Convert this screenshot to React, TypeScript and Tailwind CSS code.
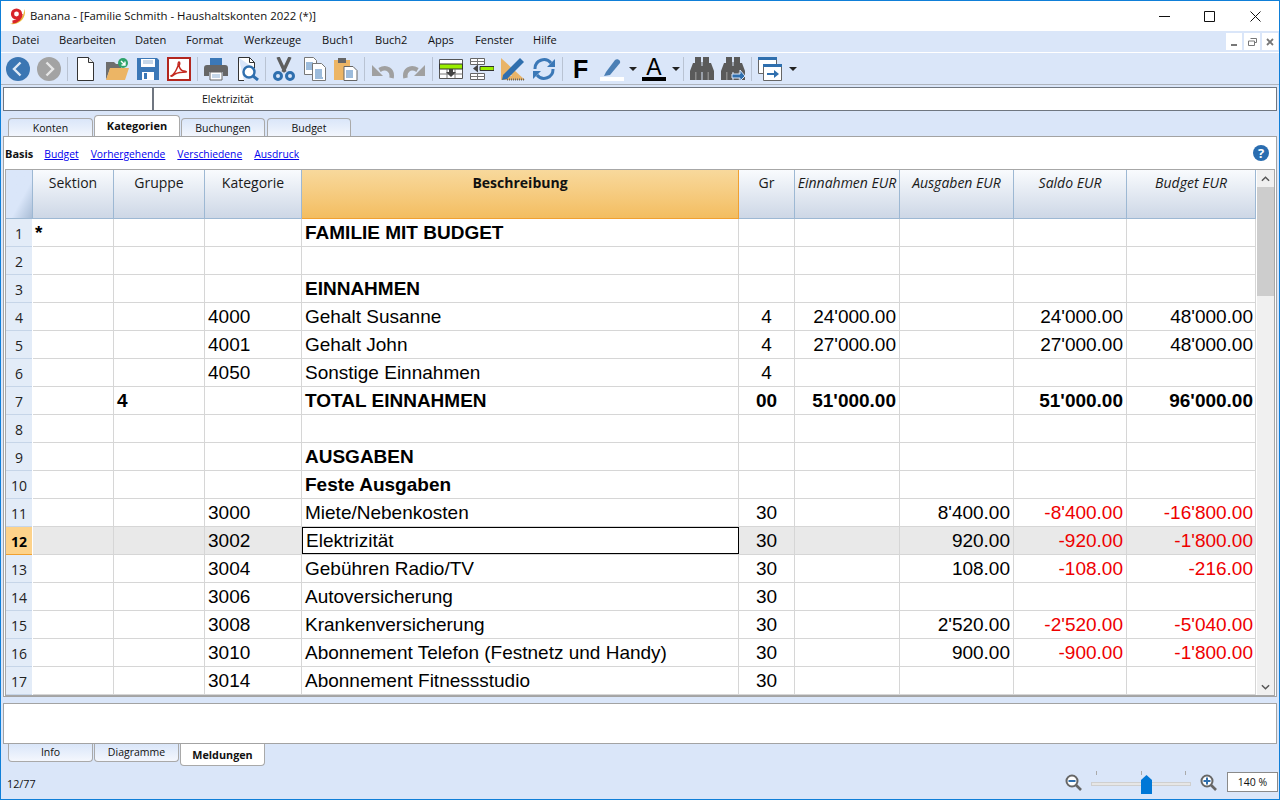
import type { ReactNode } from "react";

const ui = "font-['Open_Sans',sans-serif]";
const cell = "font-['Liberation_Sans',sans-serif]";
const gridCols = "grid grid-cols-[27px_81px_91px_97px_437px_56px_105px_114px_113px_129px]";

const menus = [
  ["Datei", "w-[47px]"],
  ["Bearbeiten", "w-[76px]"],
  ["Daten", "w-[51px]"],
  ["Format", "w-[58px]"],
  ["Werkzeuge", "w-[78px]"],
  ["Buch1", "w-[53px]"],
  ["Buch2", "w-[53px]"],
  ["Apps", "w-[47px]"],
  ["Fenster", "w-[58px]"],
  ["Hilfe", "w-[40px]"],
];

type Row = {
  sek?: string;
  grp?: string;
  kat?: string;
  desc?: string;
  gr?: string;
  ein?: string;
  aus?: string;
  sal?: string;
  bud?: string;
  bold?: boolean;
};

const rows: Row[] = [
  { sek: "*", desc: "FAMILIE MIT BUDGET", bold: true },
  {},
  { desc: "EINNAHMEN", bold: true },
  { kat: "4000", desc: "Gehalt Susanne", gr: "4", ein: "24'000.00", sal: "24'000.00", bud: "48'000.00" },
  { kat: "4001", desc: "Gehalt John", gr: "4", ein: "27'000.00", sal: "27'000.00", bud: "48'000.00" },
  { kat: "4050", desc: "Sonstige Einnahmen", gr: "4" },
  { grp: "4", desc: "TOTAL EINNAHMEN", gr: "00", ein: "51'000.00", sal: "51'000.00", bud: "96'000.00", bold: true },
  {},
  { desc: "AUSGABEN", bold: true },
  { desc: "Feste Ausgaben", bold: true },
  { kat: "3000", desc: "Miete/Nebenkosten", gr: "30", aus: "8'400.00", sal: "-8'400.00", bud: "-16'800.00" },
  { kat: "3002", desc: "Elektrizität", gr: "30", aus: "920.00", sal: "-920.00", bud: "-1'800.00" },
  { kat: "3004", desc: "Gebühren Radio/TV", gr: "30", aus: "108.00", sal: "-108.00", bud: "-216.00" },
  { kat: "3006", desc: "Autoversicherung", gr: "30" },
  { kat: "3008", desc: "Krankenversicherung", gr: "30", aus: "2'520.00", sal: "-2'520.00", bud: "-5'040.00" },
  { kat: "3010", desc: "Abonnement Telefon (Festnetz und Handy)", gr: "30", aus: "900.00", sal: "-900.00", bud: "-1'800.00" },
  { kat: "3014", desc: "Abonnement Fitnessstudio", gr: "30" },
];

const Ico = ({ children }: { children: ReactNode }) => (
  <svg viewBox="0 0 24 24" className="w-6 h-6 block">
    {children}
  </svg>
);

const Btn = ({ children }: { children: ReactNode }) => <div className="w-[31px] shrink-0">{children}</div>;

const Sep = () => (
  <div className="w-[6px] shrink-0 flex">
    <div className="w-px h-6 bg-[#b9c3d3] -ml-px" />
  </div>
);

const Caret = ({ className }: { className: string }) => (
  <svg viewBox="0 0 8 4" className={`w-2 h-1 ${className}`}>
    <path d="M0 0h8L4 4z" fill="#222" />
  </svg>
);

const Lines = ({ x, y }: { x: number; y: number }) => (
  <path
    d={`M${x} ${y}h7M${x} ${y + 2}h7M${x} ${y + 4}h7M${x} ${y + 6}h7`}
    stroke="#3a78b8"
    strokeWidth="1"
  />
);

const Binoculars = () => (
  <>
    <path d="M5 0h6v5h.5v18H0v-9l3-8h2zM13 0h6v6h2l3 8v9H12.500V5h.5z" fill="#5a5a5a" />
    <path d="M11 9h2v6h-2z" fill="#5a5a5a" />
    <path d="M5 15h1.500v8H5zM17.500 15H19v8h-1.500z" fill="#8a8a8a" />
  </>
);

const Toolbar = () => (
  <div className="h-[31px] flex items-center pl-[5px] bg-[#dae6f9] border-b border-[#aeb4bd] box-content">
    <Btn>
      <Ico>
        <circle cx="12" cy="12" r="12" fill="#3b76b3" />
        <path d="M14.5 5.5 8 12l6.5 6.5" fill="none" stroke="#dfe9f5" strokeWidth="2.4" />
      </Ico>
    </Btn>
    <Btn>
      <Ico>
        <circle cx="12" cy="12" r="12" fill="#a3a3a3" />
        <path d="M9.5 5.5 16 12l-6.5 6.5" fill="none" stroke="#e6e6e6" strokeWidth="2.4" />
      </Ico>
    </Btn>
    <Sep />
    <Btn>
      <Ico>
        <path d="M3.5.5h11l5 5v18h-16z" fill="#fff" stroke="#333" />
        <path d="M14.5.5v5h5" fill="#eee" stroke="#333" />
      </Ico>
    </Btn>
    <Btn>
      <Ico>
        <path d="M1 5h8l2 2h5v5H5l-4 11z" fill="#6e6e6e" />
        <path d="M5 11h19l-4 12H1z" fill="#ecb565" />
        <circle cx="18" cy="6" r="5" fill="#2fa36b" />
        <path d="M16 4l4 4m0-3.5V8h-3.5" fill="none" stroke="#fff" strokeWidth="1.4" />
      </Ico>
    </Btn>
    <Btn>
      <Ico>
        <path d="M1 1h20l2 2v20H1z" fill="#3b78b7" />
        <path d="M5 2h14v8H5z" fill="#fff" />
        <path d="M7 4h10M7 6h10" stroke="#8db0d3" />
        <path d="M6 15h12v8H6z" fill="#fff" />
        <path d="M8 16h3v6H8z" fill="#3b78b7" />
      </Ico>
    </Btn>
    <Btn>
      <Ico>
        <path d="M1 1h22v22H1z" fill="#fff" stroke="#b3261e" strokeWidth="2" />
        <path
          d="M4 19c3-1 5-5 7-10 0-2 0-4 1-4s1 2 0 4c1 3 3 5 5 5 2 0 3 1 2 1-3 0-7 0-11 2-2 1-3 3-4 2z"
          fill="none"
          stroke="#c4281f"
          strokeWidth="1.5"
        />
      </Ico>
    </Btn>
    <Sep />
    <Btn>
      <Ico>
        <path d="M6 1h12v7H6z" fill="#3b78b7" />
        <path d="M3 8h18a3 3 0 0 1 3 3v8h-5v-4H5v4H0v-8a3 3 0 0 1 3-3z" fill="#666" />
        <path d="M6 15h12v8H6z" fill="#fff" stroke="#666" />
        <path d="M8 18h8M8 20h8" stroke="#8db0d3" />
      </Ico>
    </Btn>
    <Btn>
      <Ico>
        <path d="M3.5.5h11l5 5v6M9 23.5H3.5V.5" fill="#fff" stroke="#333" />
        <path d="M14.5.5v5h5" fill="none" stroke="#333" />
        <circle cx="14" cy="15" r="5.5" fill="#fff" stroke="#2f6fae" strokeWidth="2.4" />
        <path d="M18 19l5 4" stroke="#2f6fae" strokeWidth="3" />
      </Ico>
    </Btn>
    <Sep />
    <Btn>
      <Ico>
        <path d="M6 0l7 15M18 0l-7 15" stroke="#5f5f5f" strokeWidth="3.4" />
        <circle cx="6" cy="19" r="3.500" fill="none" stroke="#2f6fae" strokeWidth="3" />
        <circle cx="18" cy="19" r="3.500" fill="none" stroke="#2f6fae" strokeWidth="3" />
      </Ico>
    </Btn>
    <Btn>
      <Ico>
        <path d="M1.5.5h9l3 3v14h-12z" fill="#fff" stroke="#777" />
        <Lines x={3} y={6} />
        <path d="M9.5 6.5h9l4 4v13h-13z" fill="#fff" stroke="#777" />
        <Lines x={12} y={13} />
        <path d="M12 21h8" stroke="#3a78b8" />
      </Ico>
    </Btn>
    <Btn>
      <Ico>
        <path d="M0 3h16v20H0z" fill="#ecb565" />
        <path d="M4 1h8v5H4z" fill="#666" />
        <path d="M10 9.5h9l4 4v10H10z" fill="#fff" stroke="#666" />
        <Lines x={12} y={14} />
      </Ico>
    </Btn>
    <Sep />
    <Btn>
      <Ico>
        <path d="M20.500 21c1.500-8-5-12-12-8" fill="none" stroke="#a0a0a0" strokeWidth="4.500" />
        <path d="M1 19V8l11 11z" fill="#a0a0a0" />
      </Ico>
    </Btn>
    <Btn>
      <Ico>
        <path d="M3.500 21c-1.500-8 5-12 12-8" fill="none" stroke="#a0a0a0" strokeWidth="4.500" />
        <path d="M23 19V8L12 19z" fill="#a0a0a0" />
      </Ico>
    </Btn>
    <Sep />
    <Btn>
      <Ico>
        <path d="M.5 2.500h23v19H.5z" fill="#fff" stroke="#555" />
        <path d="M.5 7h23v5H.5z" fill="#99ee00" stroke="#333" />
        <path d="M.5 17h23M8 12v9M16 12v9" stroke="#777" />
        <path d="M10 12h4v3h3l-5 5-5-5h3z" fill="#444" />
      </Ico>
    </Btn>
    <Btn>
      <Ico>
        <path d="M.5 1.500h14v6H.5zM.5 16.500h14v6H.5z" fill="#fff" stroke="#666" />
        <path d="M.5 4.500h14M7.500 1.500v6M.5 19.500h14M7.500 16.500v6" stroke="#777" />
        <path d="M10 9.500h14v4H10z" fill="#99ee00" stroke="#333" />
        <path d="M3 11.500l5-4v8z" fill="#444" />
      </Ico>
    </Btn>
    <Btn>
      <Ico>
        <path d="M0 1l24 22H0z" fill="#e9b468" />
        <path d="M6 14l5 5H6z" fill="#dae6f9" />
        <path d="M2 18L17 3l2-2 4 4-2 2L6 22l-5 1z" fill="#2f6fae" />
        <path d="M6 22.500h18" stroke="#666" strokeDasharray="1 1" strokeWidth="2" />
      </Ico>
    </Btn>
    <Btn>
      <Ico>
        <path d="M3 12a9 9 0 0 1 16-6" fill="none" stroke="#3b78b7" strokeWidth="3" />
        <path d="M21 12a9 9 0 0 1-16 6" fill="none" stroke="#3b78b7" strokeWidth="3" />
        <path d="M23 2v8h-8zM1 22v-8h8z" fill="#3b78b7" />
      </Ico>
    </Btn>
    <Sep />
    <div className={`w-[31px] shrink-0 pl-[4px] text-[25px] leading-6 font-bold text-black ${cell}`}>F</div>
    <div className="w-[42px] shrink-0 relative h-6">
      <svg viewBox="0 0 24 24" className="w-6 h-6 block">
        <path d="M6 15l9-12c2-2 6 0 5 3L10 18l-6 1z" fill="#4b7fb5" />
        <path d="M0 20h24v4H0z" fill="#fff" />
      </svg>
      <Caret className="absolute left-[29px] top-[10px]" />
    </div>
    <div className={`w-[42px] shrink-0 relative h-6 ${cell}`}>
      <div className="w-6 text-center text-[23px] leading-[20px] text-black">A</div>
      <div className="w-6 h-1 bg-black absolute left-0 top-5" />
      <Caret className="absolute left-[30px] top-[10px]" />
    </div>
    <Sep />
    <Btn>
      <Ico>
        <Binoculars />
      </Ico>
    </Btn>
    <Btn>
      <Ico>
        <Binoculars />
        <path d="M11 17h8v-4l5 6-5 5v-3h-8z" fill="#2f6fae" stroke="#dae6f9" />
      </Ico>
    </Btn>
    <Sep />
    <Btn>
      <Ico>
        <path d="M.5.500h18v16H.5z" fill="#fff" stroke="#666" />
        <path d="M0 0h19v3H0z" fill="#2f6fae" />
        <path d="M5.500 7.500h18v16h-18z" fill="#fff" stroke="#666" />
        <path d="M5 7h19v3H5z" fill="#2f6fae" />
        <path d="M9 16h7v-3l5 4-5 4v-3H9z" fill="#2f6fae" />
      </Ico>
    </Btn>
    <Caret className="" />
  </div>
);

const TopTab = ({ label, active, className }: { label: string; active?: boolean; className: string }) => (
  <div
    className={`${className} flex items-center justify-center border border-b-0 border-[#a9a9a9] rounded-t-[4px] text-[#111] ${
      active
        ? "h-[22px] bg-white font-bold text-[11px]"
        : "h-[19px] pt-[2px] text-[10.5px] bg-gradient-to-b from-[#dae6f9] to-[#f4f7fd]"
    }`}
  >
    {label}
  </div>
);

const BottomTab = ({ label, active, className }: { label: string; active?: boolean; className: string }) => (
  <div
    className={`${className} flex items-center justify-center border border-t-0 border-[#a9a9a9] rounded-b-[4px] text-[#111] ${
      active
        ? "h-[22px] bg-white font-bold text-[10.8px] pt-[1px]"
        : "h-[18px] text-[10.5px] bg-gradient-to-b from-[#dae6f9] to-[#f4f7fd]"
    }`}
  >
    {label}
  </div>
);

const heads = [
  { t: "Sektion", c: "w-[81px]" },
  { t: "Gruppe", c: "w-[91px]" },
  { t: "Kategorie", c: "w-[97px]" },
];
const headsRight = [
  { t: "Gr", c: "w-[56px]" },
  { t: "Einnahmen EUR", c: "w-[105px] italic" },
  { t: "Ausgaben EUR", c: "w-[114px] italic" },
  { t: "Saldo EUR", c: "w-[113px] italic" },
  { t: "Budget EUR", c: "w-[129px] italic" },
];

const headCell =
  "h-[49px] pt-[4px] text-center text-[14px] leading-[18px] text-[#1a1a1a] border-r border-b border-[#9db8d3] bg-gradient-to-b from-[#f9fbfe] to-[#cdd7e6]";

const Amount = ({ v, red, bold, className }: { v?: string; red?: boolean; bold?: boolean; className: string }) => (
  <div
    className={`border-r border-[#d6d6d6] text-right ${className} ${red ? "text-[#ee0000]" : "text-black"} ${
      bold ? "font-bold" : ""
    }`}
  >
    {v}
  </div>
);

const Table = () => (
  <div className="flex mx-[1px] border border-[#a7a7a7] h-[527px] overflow-hidden bg-white">
    <div className="w-[1250px] shrink-0">
      <div className={`flex ${ui}`}>
        <div className="w-[27px] h-[49px] bg-gradient-to-br from-[#dae6f9] from-60% to-[#a9bdd6] border-r border-b border-[#9db8d3]" />
        {heads.map((h) => (
          <div key={h.t} className={`${h.c} ${headCell}`}>
            {h.t}
          </div>
        ))}
        <div className="w-[437px] h-[49px] pt-[4px] text-center text-[14px] leading-[18px] font-bold text-[#111] border-r border-b border-[#f0a030] bg-gradient-to-b from-[#f8d99c] to-[#f3bd5f]">
          Beschreibung
        </div>
        {headsRight.map((h) => (
          <div key={h.t} className={`${h.c} ${headCell}`}>
            {h.t}
          </div>
        ))}
      </div>
      {rows.map((r, i) => {
        const sel = i === 11;
        const red = !!r.sal && r.sal.startsWith("-");
        return (
          <div
            key={i}
            className={`${gridCols} h-[28px] border-b border-[#d6d6d6] text-[19px] leading-[27px] ${cell} ${
              sel ? "bg-[#e9e9e9]" : ""
            }`}
          >
            <div className="bg-white h-[28px]">
              <div
                className={`${ui} w-[26px] text-center text-[14px] leading-[30px] text-[#222] border-b ${
                  sel
                    ? "bg-[#fdd28a] font-bold text-black border-[#f0a030]"
                    : "bg-[#e3ecf8] border-[#c6d5e8]"
                } h-[28px]`}
              >
                {i + 1}
              </div>
            </div>
            <div className="border-r border-[#d6d6d6] pl-[2px] font-bold text-black">{r.sek}</div>
            <div className="border-r border-[#d6d6d6] pl-[3px] font-bold text-black">{r.grp}</div>
            <div className="border-r border-[#d6d6d6] pl-[3px] text-black">{r.kat}</div>
            {sel ? (
              <div className="h-[27px] bg-white border border-black pl-[3px] leading-[25px] text-black">{r.desc}</div>
            ) : (
              <div className={`border-r border-[#d6d6d6] pl-[3px] text-black ${r.bold ? "font-bold" : ""}`}>{r.desc}</div>
            )}
            <div className={`border-r border-[#d6d6d6] text-center text-black ${r.bold ? "font-bold" : ""}`}>{r.gr}</div>
            <Amount v={r.ein} bold={r.bold} className="pr-[3px]" />
            <Amount v={r.aus} bold={r.bold} className="pr-[3px]" />
            <Amount v={r.sal} red={red} bold={r.bold} className="pr-[3px]" />
            <Amount v={r.bud} red={red} bold={r.bold} className="pr-[2px]" />
          </div>
        );
      })}
    </div>
    <div className="w-[17px] ml-px bg-[#f0f0f0] flex flex-col h-[525px]">
      <div className="h-[17px] flex items-center justify-center">
        <svg viewBox="0 0 10 6" className="w-[9px] h-[6px]">
          <path d="M1 5l4-4 4 4" fill="none" stroke="#555" strokeWidth="1.6" />
        </svg>
      </div>
      <div className="h-[109px] bg-[#cdcdcd]" />
      <div className="flex-1" />
      <div className="h-[17px] flex items-center justify-center">
        <svg viewBox="0 0 10 6" className="w-[9px] h-[6px]">
          <path d="M1 1l4 4 4-4" fill="none" stroke="#555" strokeWidth="1.6" />
        </svg>
      </div>
    </div>
  </div>
);

const Magnifier = ({ plus }: { plus?: boolean }) => (
  <svg viewBox="0 0 17 17" className="w-[17px] h-[17px] block">
    <circle cx="7" cy="7" r="5.5" fill="#fff" stroke="#666" strokeWidth="2" />
    <path d="M11 11l5 5" stroke="#666" strokeWidth="2.6" />
    <path d={plus ? "M3.500 7h7M7 3.500v7" : "M3.500 7h7"} stroke="#2f6fae" strokeWidth="2" />
  </svg>
);

export default function App() {
  return (
    <div className={`w-[1280px] h-[800px] border border-[#0f7fd8] bg-[#dae6f9] flex flex-col overflow-hidden ${ui}`}>
      {/* title bar */}
      <div className="h-[30px] bg-white flex items-center shrink-0">
        <svg viewBox="0 0 16 17" className="w-4 h-[17px] ml-[8px] mt-[1px]">
          <path d="M1 16c7 1 14-3 15-11 0-2-.5-3-1-4 1 7-5 13-14 15z" fill="#eab93a" />
          <circle cx="7.500" cy="6" r="4" fill="none" stroke="#d8242a" strokeWidth="3.200" />
          <path d="M12.300 6c0 4-3.500 7.500-8.800 8" fill="none" stroke="#d8242a" strokeWidth="3" />
        </svg>
        <div className="ml-[5px] text-[11.4px] text-[#111] whitespace-nowrap">Banana - [Familie Schmith - Haushaltskonten 2022 (*)]</div>
        <div className="ml-auto flex items-center">
          <svg viewBox="0 0 11 11" className="w-[11px] h-[11px] mr-[34px]">
            <path d="M0 5.500h11" stroke="#111" />
          </svg>
          <svg viewBox="0 0 11 11" className="w-[11px] h-[11px] mr-[35px]">
            <path d="M.5.500h10v10H.5z" fill="none" stroke="#111" />
          </svg>
          <svg viewBox="0 0 11 11" className="w-[11px] h-[11px] mr-[18px]">
            <path d="M.5.500l10 10M10.500.500l-10 10" stroke="#111" />
          </svg>
        </div>
      </div>

      {/* menu bar */}
      <div className="h-[21px] flex items-center pl-[5px] shrink-0 text-[11.1px] text-[#111]">
        {menus.map(([m, w]) => (
          <div key={m} className={`${w} px-[6px] pb-[3px] whitespace-nowrap`}>
            {m}
          </div>
        ))}
        <div className="ml-auto flex gap-[2px] mr-[1px]">
          <div className="w-[16px] h-[17px] bg-white flex items-end justify-center pb-[4px]">
            <div className="w-[6px] h-[2px] bg-[#777]" />
          </div>
          <div className="w-[16px] h-[17px] bg-white flex items-center justify-center">
            <svg viewBox="0 0 9 8" className="w-[9px] h-2">
              <path d="M2.500.500h6v4h-2M.5 3h6v4.500h-6z" fill="none" stroke="#777" />
            </svg>
          </div>
          <div className="w-[16px] h-[17px] bg-white flex items-center justify-center">
            <svg viewBox="0 0 8 8" className="w-2 h-2">
              <path d="M1 1l6 6M7 1l-6 6" stroke="#777" strokeWidth="1.8" />
            </svg>
          </div>
        </div>
      </div>
      <div className="h-px bg-white shrink-0" />

      <Toolbar />

      {/* formula bar */}
      <div className="mt-[2px] mx-[2px] h-[24px] flex bg-white border border-[#6f7680] shrink-0">
        <div className="w-[150px] border-r-2 border-[#6f7680]" />
        <div className="ml-[48px] text-[10.5px] leading-[22px] text-[#111]">Elektrizität</div>
      </div>

      {/* tabs */}
      <div className="h-[26px] pl-[7px] flex items-end gap-px shrink-0">
        <TopTab label="Konten" className="w-[85px]" />
        <TopTab label="Kategorien" active className="w-[86px]" />
        <TopTab label="Buchungen" className="w-[84px] mr-px" />
        <TopTab label="Budget" className="w-[84px]" />
      </div>

      {/* main panel */}
      <div className="mx-[2px] h-[561px] -mt-px bg-white border border-[#a3a3a3] shrink-0">
        <div className="h-[32px] flex items-center relative text-[10.3px] pl-[1px] pt-[3px]">
          <span className="font-bold text-[11px] text-[#111] mr-[11px]">Basis</span>
          <span className="text-[#0000ee] underline mr-[12px]">Budget</span>
          <span className="text-[#0000ee] underline mr-[12px]">Vorhergehende</span>
          <span className="text-[#0000ee] underline mr-[12px]">Verschiedene</span>
          <span className="text-[#0000ee] underline">Ausdruck</span>
          <div className="absolute right-[7px] top-[8px] w-4 h-4 rounded-full bg-[#2a6db0] text-white text-[13px] leading-4 font-bold text-center">
            ?
          </div>
        </div>
        <Table />
      </div>

      {/* message box */}
      <div className="mt-[6px] mx-[2px] h-[41px] bg-white border border-[#a3a3a3] shrink-0" />
      <div className="pl-[7px] flex items-start gap-px shrink-0 h-[22px]">
        <BottomTab label="Info" className="w-[85px]" />
        <BottomTab label="Diagramme" className="w-[85px]" />
        <BottomTab label="Meldungen" active className="w-[85px]" />
      </div>

      {/* status bar */}
      <div className="flex-1 flex items-center pl-[6px] pr-[1px] pb-[1px]">
        <div className="text-[10.8px] text-[#111] mt-[5px]">12/77</div>
        <div className="ml-auto flex items-center">
          <Magnifier />
          <div className="relative w-[100px] h-[22px] mx-[9px]">
            <div className="absolute left-0 right-0 top-[11px] h-[4px] bg-[#e6e6e6] border border-[#cfcfcf]" />
            <div className="absolute left-[5px] top-0 w-px h-[4px] bg-[#aaa]" />
            <div className="absolute left-[50px] top-0 w-px h-[4px] bg-[#aaa]" />
            <div className="absolute left-[94px] top-0 w-px h-[4px] bg-[#aaa]" />
            <svg viewBox="0 0 11 19" className="absolute left-[50px] top-[4px] w-[11px] h-[19px]">
              <path d="M0 5l5.500-5L11 5v14H0z" fill="#0078d7" />
            </svg>
          </div>
          <Magnifier plus />
          <div className="ml-[10px] w-[51px] h-[20px] bg-white border border-[#8a8a8a] text-center text-[10.5px] leading-[18px] text-[#111]">
            140 %
          </div>
        </div>
      </div>
    </div>
  );
}
